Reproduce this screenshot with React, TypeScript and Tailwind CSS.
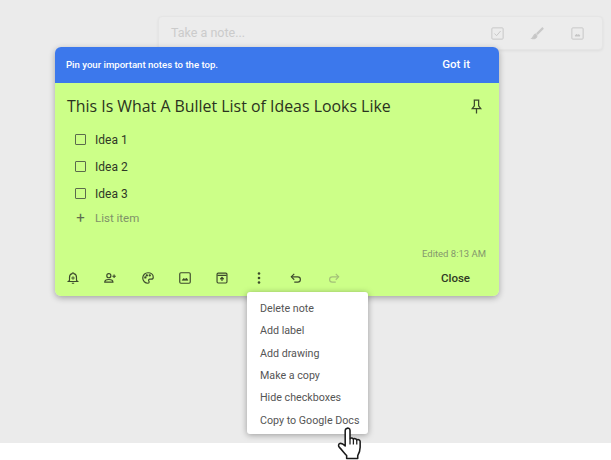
import React from "react";

const S = "#3c4a2c";

function Ico({ children, className = "" }: { children: React.ReactNode; className?: string }) {
  return (
    <svg viewBox="0 0 24 24" width="14" height="14" fill="none" stroke={S} strokeWidth="2" className={className}>
      {children}
    </svg>
  );
}

const tools = [
  <Ico key="b"><path d="M12 3a1.5 1.5 0 0 1 1.5 1.6C16.5 5.4 18 8 18 11v5l2 2H4l2-2v-5c0-3 1.5-5.6 4.500-6.400A1.500 1.500 0 0 1 12 3z" /><path d="M10 21h4" /><path d="M12 9v6M9 12h6" strokeWidth="1.500" /></Ico>,
  <Ico key="p"><circle cx="10" cy="8" r="3.500" /><path d="M3 19c0-3 3.500-4.500 7-4.500s7 1.500 7 4.500z" /><path d="M19 6v6M16 9h6" /></Ico>,
  <Ico key="c"><path d="M12 3a9 9 0 1 0 0 18c1.500 0 2-1 2-2 0-1.500-1-1.500-1-3 0-1 1-2 2-2h2.500c2 0 3.500-1.500 3.500-3.500C21 6 17 3 12 3z" /><circle cx="7.500" cy="11" r="1" fill={S} /><circle cx="10" cy="7.500" r="1" fill={S} /><circle cx="15" cy="7.500" r="1" fill={S} /></Ico>,
  <Ico key="i"><rect x="3" y="3" width="18" height="18" rx="2" /><path d="M7 16l3-3.500 2 2 2.500-2.500L17 16z" fill={S} strokeWidth="1" /></Ico>,
  <Ico key="a"><rect x="3.500" y="3.500" width="17" height="17" rx="2" /><path d="M4 7.500h16" /><path d="M12 17v-5M9 14l3-3 3 3" fill={S} /></Ico>,
];

const menu = ["Delete note", "Add label", "Add drawing", "Make a copy", "Hide checkboxes", "Copy to Google Docs"];

function Item({ label }: { label: string }) {
  return (
    <div className="flex h-[27px] items-center">
      <span className="ml-[20px] h-[11px] w-[11px] rounded-[1px] border-[1.500px] border-[#5b6a4c]" />
      <span className="ml-[9px] text-[12px] text-[#2f3826]">{label}</span>
    </div>
  );
}

export default function App() {
  return (
    <div className="relative h-[460px] w-[611px] overflow-hidden bg-white font-['Roboto',sans-serif]">
      <div className="h-[443px] bg-[#ebebeb] pt-[16px]">
        <div className="ml-[158px] flex h-[34px] w-[445px] items-center rounded-[4px] border border-[#e5e5e5] bg-[#ececec] pl-[12px] shadow-[0_1px_3px_rgba(0,0,0,0.06)]">
          <span className="flex-1 text-[12.500px] text-[#cbcbcb]">Take a note...</span>
          <svg viewBox="0 0 24 24" width="15" height="15" fill="none" stroke="#c5c5c5" strokeWidth="1.500" className="mr-[25px]">
            <rect x="3" y="3" width="18" height="18" rx="1.500" /><path d="M7 12l3.500 3.500L17 8" />
          </svg>
          <svg viewBox="0 0 24 24" width="15" height="15" fill="none" stroke="#c9c9c9" strokeWidth="2" className="mr-[25px]">
            <path d="M21 3L11 13" strokeWidth="3.500" /><path d="M9 13c-3 0-3 5-6 7 4 1 8-1 8-4z" fill="#c5c5c5" />
          </svg>
          <svg viewBox="0 0 24 24" width="15" height="15" fill="none" stroke="#c5c5c5" strokeWidth="1.500" className="mr-[17px]">
            <rect x="3" y="3" width="18" height="18" rx="1.500" /><path d="M8 16l2.500-3 2 2 1.500-1.500 2 2.500z" fill="#c5c5c5" />
          </svg>
        </div>

        <div className="relative z-10 -mt-[3px] ml-[55px] w-[444px] overflow-hidden rounded-[6px] shadow-[0_2px_6px_rgba(0,0,0,0.3)]">
          <div className="flex h-[36px] items-center justify-between bg-[#3c78ec] pl-[11px] pr-[29px] text-white">
            <span className="text-[9.600px] font-medium">Pin your important notes to the top.</span>
            <span className="text-[11.500px] font-medium">Got it</span>
          </div>
          <div className="h-[213px] bg-[#ccff88]">
            <div className="flex items-center justify-between pl-[12px] pr-[14px] pt-[12px]">
              <span className="font-['Open_Sans',sans-serif] text-[15.900px] leading-[22px] text-[#2a3320]">
                This Is What A Bullet List of Ideas Looks Like
              </span>
              <svg viewBox="0 0 24 24" width="17" height="17" fill="none" stroke={S} strokeWidth="1.800">
                <path d="M8 3h8M9 3v8l-3 4h12l-3-4V3M12 15v7" />
              </svg>
            </div>
            <div className="mt-[9px]">
              <Item label="Idea 1" />
              <Item label="Idea 2" />
              <Item label="Idea 3" />
            </div>
            <div className="flex h-[23px] items-center">
              <span className="ml-[20px] w-[11px] text-center text-[15px] leading-none text-[#5f6d50]">+</span>
              <span className="ml-[9px] text-[11.500px] text-[#7f9268]">List item</span>
            </div>
            <div className="mt-[17px] pr-[13px] text-right text-[9.500px] text-[#84976c]">Edited 8:13 AM</div>
            <div className="mt-[9px] flex h-[16px] items-center pl-[11px]">
              {tools.map((t, i) => (
                <span key={i} className="flex w-[37.300px] shrink-0">{t}</span>
              ))}
              <svg viewBox="0 0 14 14" width="14" height="14" className="mr-[23px]">
                <circle cx="7" cy="2.500" r="1.300" fill={S} /><circle cx="7" cy="7" r="1.300" fill={S} /><circle cx="7" cy="11.500" r="1.300" fill={S} />
              </svg>
              <Ico className="mr-[24px]"><path d="M9 5L4 10l5 5" /><path d="M5 10h10a4.500 4.500 0 0 1 0 9H9" /></Ico>
              <svg viewBox="0 0 24 24" width="14" height="14" fill="none" stroke="#a3c078" strokeWidth="2">
                <path d="M15 5l5 5-5 5" /><path d="M19 10H9a4.500 4.500 0 0 0 0 9h6" />
              </svg>
              <span className="ml-auto mr-[29px] text-[11.500px] font-medium text-[#2f3a24]">Close</span>
            </div>
          </div>
        </div>
      </div>

      <div className="absolute left-[247px] top-[292px] z-20 w-[121px] rounded-[3px] bg-white pb-[2px] pt-[6px] shadow-[0_1px_6px_rgba(0,0,0,0.35)]">
        {menu.map((m) => (
          <div key={m} className="flex h-[22.300px] items-center whitespace-nowrap pl-[13px] text-[10.700px] text-[#555555]">
            {m}
          </div>
        ))}
      </div>

      <svg viewBox="0 0 28 36" width="27" height="35" className="absolute left-[337px] top-[426px] z-30">
        <path
          d="M10 2.500c1.500-1 3.500 0 3.500 2V13c1-1 3-1 3.500.5 1-1 3-.7 3.500.8 1-.8 3.500-.4 3.500 1.700v6c0 4-1 6-2.500 8.500v3H10v-3c-2-2-5-6-7.500-8.500-1.500-1.500-1-3.500.5-4 2-.7 3.500.6 5.500 2.500V4.500c0-1 .5-1.500 1.500-2z"
          fill="#fff"
          stroke="#1a1a1a"
          strokeWidth="1.600"
          strokeLinejoin="round"
        />
        <path d="M13.500 13v6M17 13.500V19M20.500 14.300V19" stroke="#1a1a1a" strokeWidth="1.300" />
      </svg>
    </div>
  );
}
